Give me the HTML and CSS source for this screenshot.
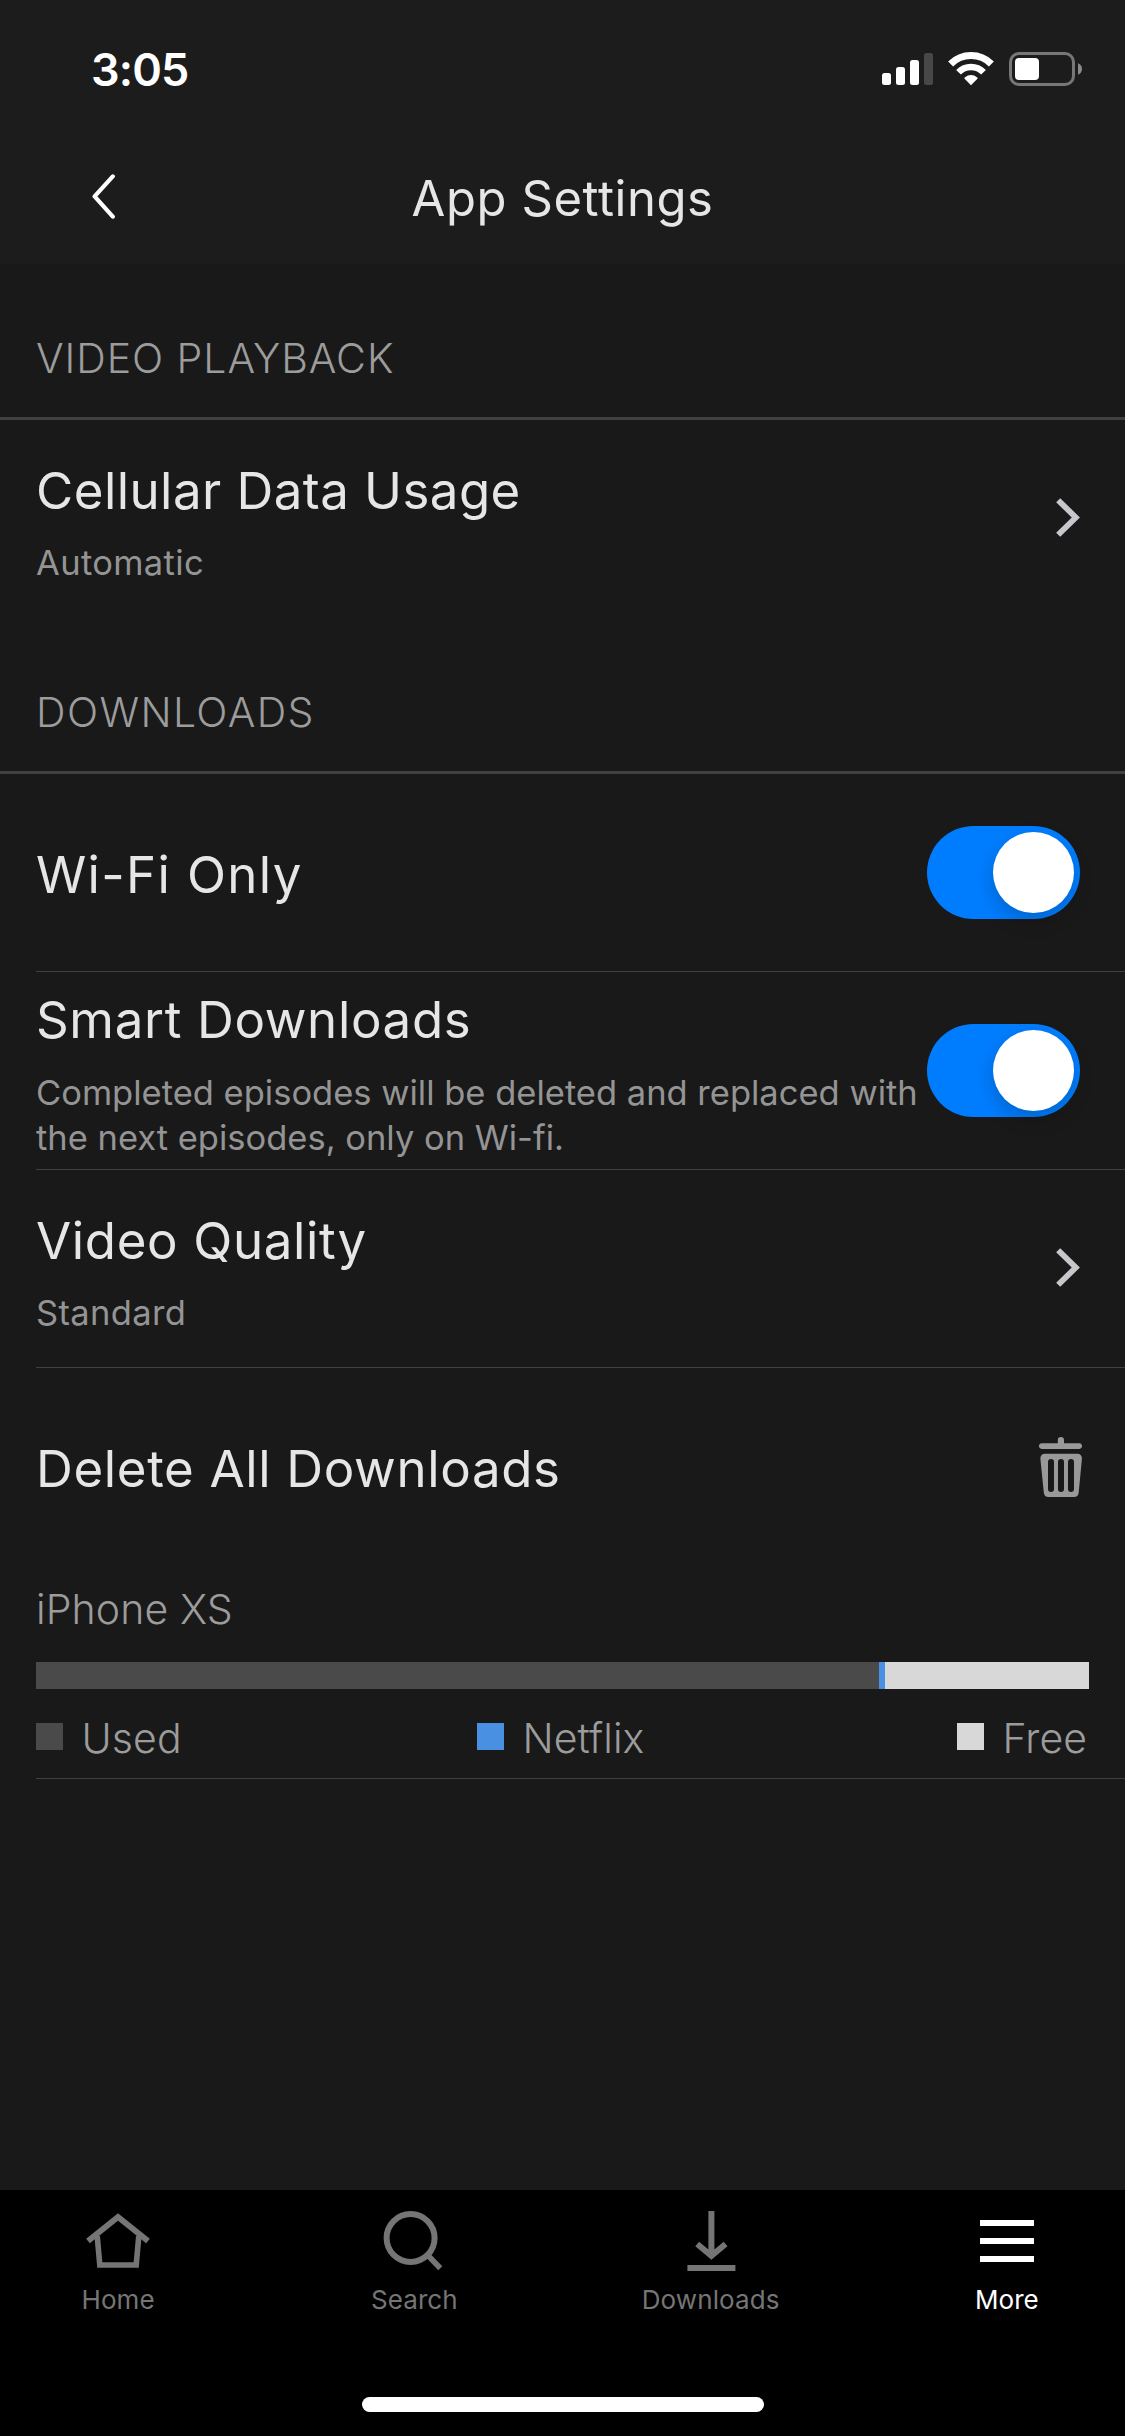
FILE: index.html
```html
<!DOCTYPE html>
<html lang="en">
<head>
<meta charset="utf-8">
<title>App Settings</title>
<link rel="stylesheet" href="styles.css">
</head>
<body>
<div class="screen">
  <header class="header">
    <div class="status">
      <span class="time">3:05</span>
      <div class="status-icons">
        <svg width="37" height="34" viewBox="0 0 37 34" fill="#fff">
          <rect x="0" y="21" width="9" height="12" rx="2.5"/>
          <rect x="14" y="15" width="9" height="18" rx="2.5"/>
          <rect x="28" y="8" width="9" height="25" rx="2.5"/>
        </svg>
        <svg class="bar-off" width="9" height="34" viewBox="0 0 9 34"><rect y="1" width="9" height="32" rx="2.5" fill="#484848"/></svg>
        <svg class="wifi" width="46" height="34" viewBox="0 0 46 34">
          <g fill="none" stroke="#fff" stroke-linejoin="round">
            <path d="M2.6 12A28.8 28.8 0 0 1 43.4 12" stroke-width="7"/>
            <path d="M10.5 20.2A17.6 17.6 0 0 1 35.5 20.2" stroke-width="6.6"/>
          </g>
          <path d="M23 33.2L16.6 26.7Q16 26 16.7 25.4Q23 20.8 29.3 25.4Q30 26 29.4 26.7Z" fill="#fff"/>
        </svg>
        <svg class="battery" width="73" height="34" viewBox="0 0 73 34">
          <rect x="1.5" y="1.5" width="63" height="31" rx="8.5" fill="none" stroke="#777" stroke-width="3"/>
          <rect x="6" y="6" width="24" height="22" rx="4" fill="#fff"/>
          <path d="M69 11.3Q73 13 73 17Q73 21 69 22.7Z" fill="#8a8a8a"/>
        </svg>
      </div>
    </div>
    <nav class="nav">
      <svg class="back" width="24" height="46" viewBox="0 0 24 46" fill="none" stroke="#fff" stroke-width="4.2" stroke-linecap="round" stroke-linejoin="round"><path d="M20.8 2.4L2.6 22.4L20.8 42.6"/></svg>
      <h1 class="nav-title">App Settings</h1>
    </nav>
  </header>

  <main class="content">
    <h2 class="section-title">VIDEO PLAYBACK</h2>
    <div class="row row-last">
      <div class="row-text">
        <div class="title title-snug">Cellular Data Usage</div>
        <div class="sub">Automatic</div>
      </div>
      <svg class="chevron" width="24" height="39" viewBox="0 0 24 39"><path d="M2.2 2.2L19.8 19.5L2.2 36.8"/></svg>
    </div>

    <h2 class="section-title section-downloads">DOWNLOADS</h2>
    <div class="row">
      <div class="row-text single"><div class="title title-wide">Wi-Fi Only</div></div>
      <div class="toggle"><div class="knob"></div></div>
    </div>
    <div class="row">
      <div class="row-text tall">
        <div class="title">Smart Downloads</div>
        <div class="sub long">Completed episodes will be deleted and replaced with<br>the next episodes, only on Wi-fi.</div>
      </div>
      <div class="toggle"><div class="knob"></div></div>
    </div>
    <div class="row">
      <div class="row-text">
        <div class="title">Video Quality</div>
        <div class="sub">Standard</div>
      </div>
      <svg class="chevron" width="24" height="39" viewBox="0 0 24 39"><path d="M2.2 2.2L19.8 19.5L2.2 36.8"/></svg>
    </div>
    <div class="row row-last">
      <div class="row-text single"><div class="title">Delete All Downloads</div></div>
      <svg class="trash" width="43" height="60" viewBox="0 0 43 60">
        <path fill="#999" d="M2.8 6.3H18.8V3.1Q18.8 0 21.9 0Q25 0 25 3.1V6.3H40.2A2.8 2.8 0 0 1 40.2 12H2.8A2.8 2.8 0 0 1 2.8 6.3Z"/>
        <path fill="#999" fill-rule="evenodd" d="M6 16.7H38Q43.2 16.7 42.9 22L39.7 55.5Q39.2 60 35 60H9.5Q5.2 60 4.8 55.5L1.4 22Q1.2 16.7 6 16.7ZM9 25V52A3 3 0 0 0 15 52V25A3 3 0 0 0 9 25ZM19 25V52A3 3 0 0 0 25 52V25A3 3 0 0 0 19 25ZM29 25V52A3 3 0 0 0 35 52V25A3 3 0 0 0 29 25Z"/>
      </svg>
    </div>

    <section class="storage">
      <div class="device">iPhone XS</div>
      <div class="bar">
        <div class="used" style="width:843px"></div>
        <div class="netflix" style="width:6px"></div>
        <div class="free" style="width:204px"></div>
      </div>
      <div class="legend">
        <div class="item"><span class="swatch used"></span>Used</div>
        <div class="item"><span class="swatch netflix"></span>Netflix</div>
        <div class="item"><span class="swatch free"></span>Free</div>
      </div>
    </section>
  </main>

  <footer class="tabbar">
    <div class="tabs">
      <div class="tab">
        <svg width="90" height="94" viewBox="0 0 90 94" fill="none" stroke="currentColor"><path d="M15 51L45 27L75 51" stroke-width="6"/><path d="M24.2 46L26.8 75H63.2L65.8 46" stroke-width="5.6"/></svg>
        <span>Home</span>
      </div>
      <div class="tab">
        <svg width="90" height="94" viewBox="0 0 90 94" fill="none" stroke="currentColor"><circle cx="41.6" cy="48" r="24" stroke-width="6"/><path d="M58.5 65L71.3 78.3" stroke-width="5.6"/></svg>
        <span>Search</span>
      </div>
      <div class="tab">
        <svg width="90" height="94" viewBox="0 0 90 94" fill="none" stroke="currentColor" stroke-width="6"><path d="M45.4 21V65M31.2 54L45.4 65.8L59.6 54M21.4 78H69.4"/></svg>
        <span>Downloads</span>
      </div>
      <div class="tab active">
        <svg width="90" height="94" viewBox="0 0 90 94" fill="none" stroke="currentColor" stroke-width="6"><path d="M18 33H72M18 51H72M18 69H72"/></svg>
        <span>More</span>
      </div>
    </div>
    <div class="home-indicator"></div>
  </footer>
</div>
</body>
</html>
```

FILE: styles.css
```css
* { box-sizing: border-box; }

body {
  margin: 0;
  background: #191919;
  font-family: Inter, "Liberation Sans", sans-serif;
  color: #e6e6e6;
}

h1, h2 { margin: 0; }
svg { display: block; flex: none; }

.screen {
  display: flex;
  flex-direction: column;
  width: 1125px;
  height: 2436px;
  overflow: hidden;
}

.header { height: 264px; background: #1c1c1c; padding-top: 42px; }

.status {
  display: flex;
  justify-content: space-between;
  align-items: center;
  height: 54px;
  padding: 0 43px 0 91px;
}
.time {
  padding-top: 1px;
  font-size: 45px;
  font-weight: 600;
  line-height: 54px;
  letter-spacing: -0.9px;
  color: #fff;
}
.status-icons { display: flex; }
.bar-off { margin-left: 5px; }
.wifi { margin-left: 15px; }
.battery { margin-left: 15px; }

.nav {
  display: grid;
  grid-template-columns: 1fr auto 1fr;
  align-items: start;
  margin-top: 73px;
}
.back { margin: 5px 0 0 92px; }
.nav-title {
  font-size: 49px;
  font-weight: 400;
  line-height: 60px;
  letter-spacing: 0.55px;
}

.content { flex: 1; }

.section-title {
  display: flex;
  align-items: flex-end;
  height: 156px;
  padding: 0 0 34px 36px;
  border-bottom: 3px solid #404040;
  font-size: 41px;
  font-weight: 300;
  line-height: 50px;
  letter-spacing: 0.95px;
  color: #9c9c9c;
}
.section-downloads { height: 157px; letter-spacing: 1.4px; }

.row {
  display: flex;
  justify-content: space-between;
  align-items: center;
  height: 198px;
  margin-left: 36px;
  padding-right: 45px;
  border-bottom: 1px solid #404040;
}
.row-last { height: 197px; border-bottom: 0; }

.row-text { align-self: flex-start; padding-top: 40px; white-space: nowrap; }
.row-text.single { padding-top: 70px; }
.row-text.tall { padding-top: 17px; }
.title { font-size: 51px; line-height: 62px; letter-spacing: 0.65px; }
.title-wide { letter-spacing: 1.35px; }
.title-snug { letter-spacing: 0.45px; }
.sub {
  margin-top: 18px;
  font-size: 34.5px;
  line-height: 45px;
  letter-spacing: 0.35px;
  color: #949494;
}
.sub.long { margin-top: 19px; letter-spacing: 0; }

.chevron { margin-bottom: 2px; fill: none; stroke: #c7c7cc; stroke-width: 5.8; }
.trash { margin-right: -2px; }

.toggle {
  flex: none;
  display: flex;
  justify-content: flex-end;
  align-items: center;
  width: 153px;
  height: 93px;
  margin-left: -20px;
  padding-right: 6px;
  border-radius: 47px;
  background: #007dff;
}
.knob {
  width: 81px;
  height: 81px;
  border-radius: 50%;
  background: #fff;
  box-shadow: 0 8px 20px rgba(0, 0, 0, 0.2);
}

.storage {
  height: 214px;
  margin-left: 36px;
  padding-top: 19px;
  border-bottom: 1px solid #404040;
  font-size: 41px;
  font-weight: 300;
  line-height: 50px;
  letter-spacing: 0.1px;
  color: #9c9c9c;
}
.bar { display: flex; width: 1053px; height: 27px; margin-top: 28px; }
.legend { display: grid; grid-template-columns: 441px 480px auto; margin-top: 24px; }
.item { display: flex; align-items: center; gap: 18.5px; }
.swatch { width: 27px; height: 27px; margin-bottom: 3px; }
.used { background: #4a4a4a; }
.netflix { background: #4a90e2; }
.free { background: #d8d8d8; }

.tabbar {
  display: flex;
  flex-direction: column;
  align-items: center;
  height: 246px;
  background: #000;
}
.tabs {
  display: grid;
  grid-template-columns: repeat(4, 296.25px);
  margin: 0 -30px;
}
.tab {
  display: flex;
  flex-direction: column;
  align-items: center;
  font-size: 26px;
  line-height: 32px;
  letter-spacing: 0.1px;
  color: #757575;
}
.tab.active { color: #fff; }
.home-indicator {
  width: 402px;
  height: 15px;
  margin-top: 81px;
  border-radius: 8px;
  background: #fff;
}
```
